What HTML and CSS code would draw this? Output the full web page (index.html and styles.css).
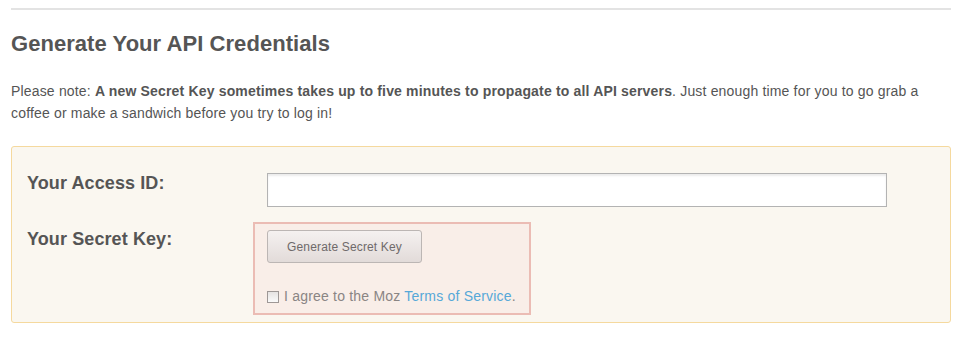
FILE: index.html
```html
<!DOCTYPE html>
<html lang="en">

<head>
    <meta charset="UTF-8">
    <title>Generate Your API Credentials</title>
    <link rel="stylesheet" href="styles.css">
</head>

<body>

    <div class="container">
        <hr class="divider">

        <h2 class="title">Generate Your API Credentials</h2>

        <p class="note">Please note: <strong>A new Secret Key sometimes takes up to five minutes to propagate to all API servers</strong>. Just enough time for you to go grab a coffee or make a sandwich before you try to log in!</p>

        <div class="creds-box">
            <div class="creds-row">
                <label class="creds-label" for="accessId">Your Access ID:</label>
                <input type="text" id="accessId" class="creds-input">
            </div>

            <div class="creds-row">
                <div class="creds-label secret">Your Secret Key:</div>
                <div class="secret-box">
                    <button class="btn-generate">Generate Secret Key</button>
                    <div class="agree">
                        <input type="checkbox" id="agreeTos" class="agree-check">
                        <label for="agreeTos">I agree to the Moz <a href="#">Terms of Service</a>.</label>
                    </div>
                </div>
            </div>
        </div>
    </div>

</body>

</html>
```

FILE: styles.css
```css
* {
    margin: 0;
    padding: 0;
    box-sizing: border-box;
}

body {
    font-family: 'Liberation Sans', Arial, sans-serif;
    background-color: #fff;
    color: #555;
}

.container {
    width: 940px;
    margin-left: 11px;
    padding-top: 8px;
}

.divider {
    border: none;
    border-top: 2px solid #e3e3e3;
}

/* Heading + note */
.title {
    font-size: 22px;
    font-weight: bold;
    line-height: 26px;
    color: #555;
    margin-top: 21px;
    letter-spacing: 0.05px;
}

.note {
    font-size: 14px;
    line-height: 22px;
    margin-top: 23px;
    color: #555;
    letter-spacing: 0.17px;
}

.note strong {
    font-weight: bold;
}

/* Credentials box */
.creds-box {
    margin-top: 22px;
    background-color: #faf7f0;
    border: 1px solid #f5d99e;
    border-radius: 3px;
    padding: 25px 15px 7px 15px;
}

.creds-row {
    display: flex;
    align-items: flex-start;
}

.creds-row + .creds-row {
    margin-top: 15px;
}

.creds-label {
    width: 240px;
    font-size: 18px;
    font-weight: bold;
    line-height: 22px;
    letter-spacing: 0.1px;
    color: #555;
}

.creds-label.secret {
    margin-top: 6px;
}

.creds-input {
    width: 620px;
    height: 34px;
    margin-top: 1px;
    border: 1px solid #b3b3b3;
    background-color: #fff;
    box-shadow: inset 0 2px 2px rgba(0, 0, 0, 0.08);
    outline: none;
    font-size: 14px;
    padding: 0 8px;
}

.secret-box {
    margin-left: -14px;
    width: 278px;
    background-color: #f9eee8;
    border: 2px solid #ebbcb4;
    padding: 6px 12px 7px 12px;
}

.btn-generate {
    display: block;
    width: 155px;
    height: 33px;
    border: 1px solid #bcb6b4;
    border-radius: 3px;
    background: linear-gradient(#f5f1f0, #e2dbd9);
    font-family: 'Liberation Sans', Arial, sans-serif;
    font-size: 12px;
    letter-spacing: 0.15px;
    color: #6f6a6a;
    cursor: pointer;
}

.agree {
    margin-top: 23px;
    display: flex;
    align-items: center;
    font-size: 14px;
    line-height: 20px;
    letter-spacing: 0.2px;
    color: #8a8584;
}

.agree-check {
    appearance: none;
    -webkit-appearance: none;
    width: 12px;
    height: 12px;
    margin-right: 5px;
    margin-top: 1px;
    border: 1px solid #9e9896;
    background: linear-gradient(#e6e3e2, #fafafa);
}

.agree a {
    color: #56a8d8;
    text-decoration: none;
}
```
